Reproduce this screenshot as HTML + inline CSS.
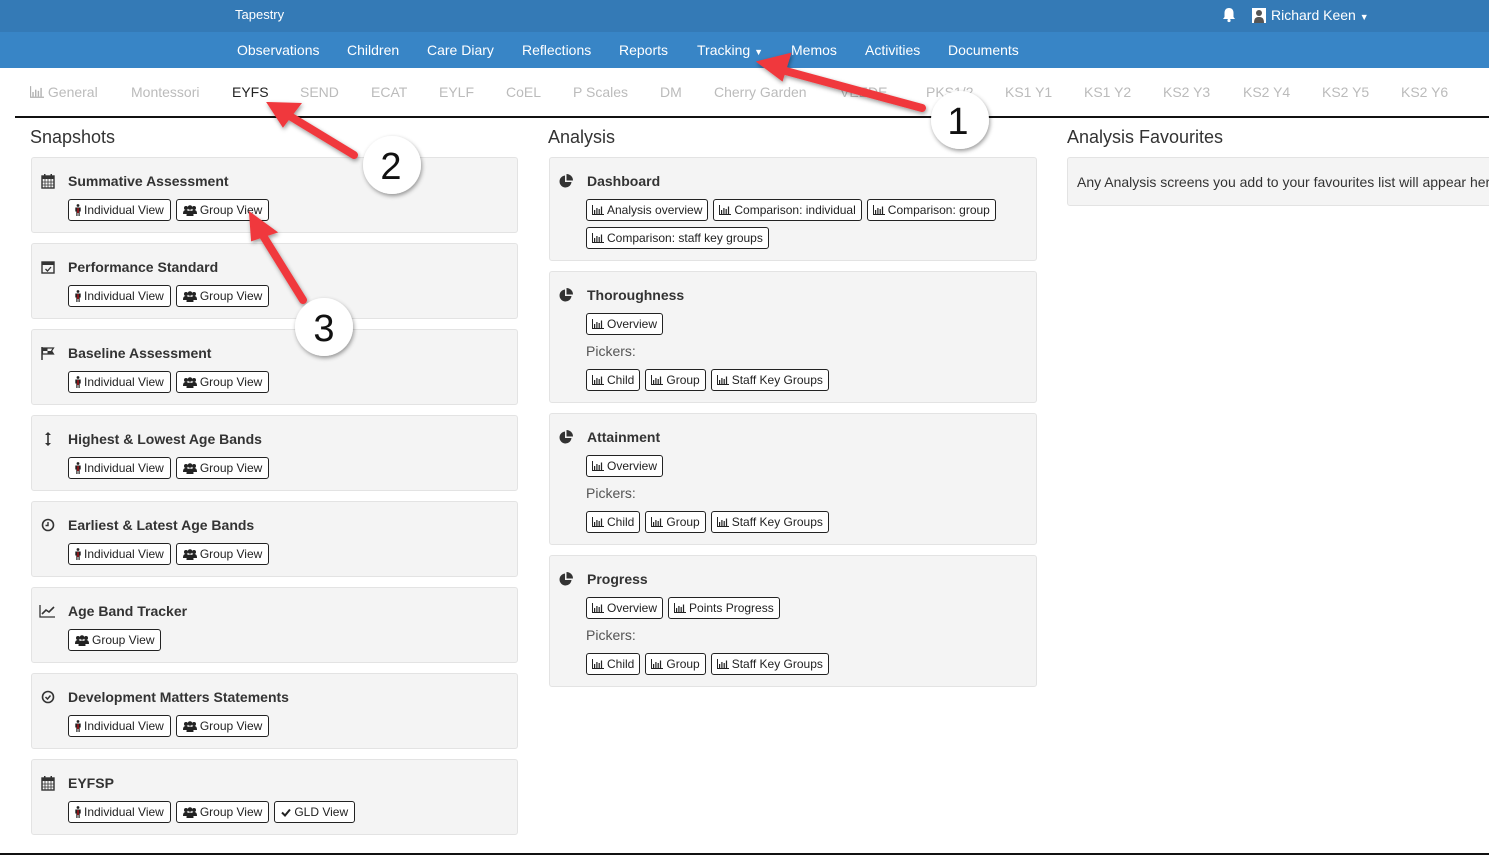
<!DOCTYPE html>
<html><head><meta charset="utf-8"><style>
*{box-sizing:border-box;margin:0;padding:0}
body{width:1489px;height:856px;position:relative;overflow:hidden;background:#fff;font-family:"Liberation Sans",Arial,sans-serif;color:#333}
.top{position:absolute;left:0;top:0;width:1489px;height:32px;background:#347ab6}
.nav{position:absolute;left:0;top:32px;width:1489px;height:36px;background:#3885c6}
.t{position:absolute;white-space:nowrap}
.w{color:#fff}
.nv{font-size:14px;color:#fff;top:42px}
.tab{font-size:14px;color:#bbb;top:84px}
.h{font-size:18px;color:#333;top:127px}
.card{position:absolute;background:#f4f4f4;border:1px solid #e3e3e3;border-radius:3px}
.ct{position:absolute;font-size:14px;font-weight:bold;color:#333;white-space:nowrap}
.ic{position:absolute;width:16px;height:16px}
.row{position:absolute;display:flex;gap:5px}
.b{height:22px;border:1px solid #222;border-radius:3px;background:#fff;font-size:12px;color:#222;padding:0 5px;line-height:20px;white-space:nowrap;display:flex;align-items:center;gap:3px}
.b.s{padding:0 6px;gap:3px}
.pk{position:absolute;font-size:14px;color:#555}
</style></head><body>
<svg width="0" height="0" style="position:absolute">
<defs>
<symbol id="ch" viewBox="0 0 12 10"><path d="M0.5 0v9.5H12" stroke="#222" fill="none"/><rect x="2" y="5" width="1.2" height="4" fill="#222"/><rect x="4.3" y="3" width="1.2" height="6" fill="#222"/><rect x="6.6" y="4" width="1.2" height="5" fill="#222"/><rect x="8.9" y="1.5" width="1.2" height="7.5" fill="#222"/></symbol>
<symbol id="pr" viewBox="0 0 6 12"><circle cx="3" cy="1.5" r="1.4" fill="#222"/><path d="M0.3 3.5h5.4v4h-1v4.5h-1.2V9h-1v3H1.3V7.5h-1z" fill="#222"/><rect x="2.2" y="4" width="1.6" height="5" fill="#a0141a"/></symbol>
<symbol id="gr" viewBox="0 0 14 11"><circle cx="3" cy="3" r="2" fill="#222"/><circle cx="11" cy="3" r="2" fill="#222"/><circle cx="7" cy="2.5" r="2.3" fill="#222"/><path d="M0 9c0-3 1-4 3-4s2 1 2 2h4c0-1 0-2 2-2s3 1 3 4z" fill="#222"/><path d="M3.5 11c0-4 1-5.5 3.5-5.5s3.5 1.5 3.5 5.5z" fill="#222"/></symbol>
<symbol id="pie" viewBox="0 0 16 16"><path d="M7 2.5A6 6 0 1 0 13.5 9H7z" fill="#333"/><path d="M8.5 1v6.5H15A6.5 6.5 0 0 0 8.5 1z" fill="#333"/></symbol>
<symbol id="cal" viewBox="0 0 16 16"><rect x="2" y="3" width="12" height="12" fill="none" stroke="#333" stroke-width="1.4"/><rect x="2" y="3" width="12" height="3" fill="#333"/><rect x="4" y="1" width="1.5" height="3" fill="#333"/><rect x="10.5" y="1" width="1.5" height="3" fill="#333"/><path d="M2 9h12M2 12h12M5 6v9M8 6v9M11 6v9" stroke="#333" stroke-width=".8"/></symbol>
</defs></svg>
<div class="top"></div><div class="nav"></div>
<div class="t w" style="left:235px;top:7px;font-size:13px">Tapestry</div>
<svg style="position:absolute;left:1222px;top:7px" width="14" height="16" viewBox="0 0 14 16"><path d="M7 1c-3 0-4.5 2-4.5 5v4L1 12h12l-1.5-2V6C11.5 3 10 1 7 1z" fill="#fff"/><circle cx="7" cy="13.5" r="1.6" fill="#fff"/></svg>
<svg style="position:absolute;left:1252px;top:8px" width="14" height="15" viewBox="0 0 14 15"><rect width="14" height="15" fill="#fff"/><circle cx="7" cy="5" r="3" fill="#555"/><path d="M2 15c0-5 2-6 5-6s5 1 5 6z" fill="#555"/></svg>
<div class="t w" style="left:1271px;top:7px;font-size:14px">Richard Keen <span style="font-size:9px">▼</span></div>
<div class="t nv" style="left:237px">Observations</div>
<div class="t nv" style="left:347px">Children</div>
<div class="t nv" style="left:427px">Care Diary</div>
<div class="t nv" style="left:522px">Reflections</div>
<div class="t nv" style="left:619px">Reports</div>
<div class="t nv" style="left:697px">Tracking <span style="font-size:9px">▼</span></div>
<div class="t nv" style="left:791px">Memos</div>
<div class="t nv" style="left:865px">Activities</div>
<div class="t nv" style="left:948px">Documents</div>

<div class="t tab" style="left:30px"><svg width="14" height="12" style="vertical-align:-1px;opacity:.35"><use href="#ch"/></svg> General</div>
<div class="t tab" style="left:131px">Montessori</div>
<div class="t tab" style="left:232px;color:#222">EYFS</div>
<div class="t tab" style="left:300px">SEND</div>
<div class="t tab" style="left:371px">ECAT</div>
<div class="t tab" style="left:439px">EYLF</div>
<div class="t tab" style="left:506px">CoEL</div>
<div class="t tab" style="left:573px">P Scales</div>
<div class="t tab" style="left:660px">DM</div>
<div class="t tab" style="left:714px">Cherry Garden</div>
<div class="t tab" style="left:840px">VEEDE</div>
<div class="t tab" style="left:926px">PKS1/2</div>
<div class="t tab" style="left:1005px">KS1 Y1</div>
<div class="t tab" style="left:1084px">KS1 Y2</div>
<div class="t tab" style="left:1163px">KS2 Y3</div>
<div class="t tab" style="left:1243px">KS2 Y4</div>
<div class="t tab" style="left:1322px">KS2 Y5</div>
<div class="t tab" style="left:1401px">KS2 Y6</div>
<div style="position:absolute;left:15px;top:116px;width:1474px;height:2px;background:#111"></div>
<div style="position:absolute;left:0;top:853px;width:1489px;height:2px;background:#111"></div>

<div class="t h" style="left:30px">Snapshots</div>
<div class="t h" style="left:548px">Analysis</div>
<div class="t h" style="left:1067px">Analysis Favourites</div>

<!-- snapshots -->
<div class="card" style="left:31px;top:157px;width:487px;height:76px"></div>
<svg class="ic" style="left:40px;top:173px"><use href="#cal"/></svg><div class="ct" style="left:68px;top:173px">Summative Assessment</div>
<div class="row" style="left:68px;top:199px"><div class="b s"><svg width="6" height="12"><use href="#pr"/></svg>Individual View</div><div class="b s"><svg width="14" height="11"><use href="#gr"/></svg>Group View</div></div>

<div class="card" style="left:31px;top:243px;width:487px;height:76px"></div>
<svg class="ic" style="left:40px;top:259px" viewBox="0 0 16 16"><rect x="2" y="3" width="12" height="11" fill="none" stroke="#333" stroke-width="1.4"/><rect x="2" y="3" width="12" height="3" fill="#333"/><path d="M5.5 10l2 2 3.5-4" stroke="#333" fill="none" stroke-width="1.3"/></svg><div class="ct" style="left:68px;top:259px">Performance Standard</div>
<div class="row" style="left:68px;top:285px"><div class="b s"><svg width="6" height="12"><use href="#pr"/></svg>Individual View</div><div class="b s"><svg width="14" height="11"><use href="#gr"/></svg>Group View</div></div>

<div class="card" style="left:31px;top:329px;width:487px;height:76px"></div>
<svg class="ic" style="left:40px;top:345px" viewBox="0 0 16 16"><path d="M2 2v13" stroke="#333" stroke-width="1.5"/><path d="M2.5 3h11l-2 3 2 3h-11z" fill="none" stroke="#333" stroke-width="1.2"/><path d="M2.5 3h5v3h-5zM7.5 6h5v3h-5z" fill="#333"/></svg><div class="ct" style="left:68px;top:345px">Baseline Assessment</div>
<div class="row" style="left:68px;top:371px"><div class="b s"><svg width="6" height="12"><use href="#pr"/></svg>Individual View</div><div class="b s"><svg width="14" height="11"><use href="#gr"/></svg>Group View</div></div>

<div class="card" style="left:31px;top:415px;width:487px;height:76px"></div>
<svg class="ic" style="left:40px;top:431px" viewBox="0 0 16 16"><path d="M8 2v12" stroke="#333" stroke-width="1.6"/><path d="M5 4l3-3 3 3zM5 12l3 3 3-3z" fill="#333"/></svg><div class="ct" style="left:68px;top:431px">Highest &amp; Lowest Age Bands</div>
<div class="row" style="left:68px;top:457px"><div class="b s"><svg width="6" height="12"><use href="#pr"/></svg>Individual View</div><div class="b s"><svg width="14" height="11"><use href="#gr"/></svg>Group View</div></div>

<div class="card" style="left:31px;top:501px;width:487px;height:76px"></div>
<svg class="ic" style="left:40px;top:517px" viewBox="0 0 16 16"><circle cx="8" cy="8" r="5.5" fill="none" stroke="#333" stroke-width="1.6"/><path d="M8 5v3.5H5.5" fill="none" stroke="#333" stroke-width="1.4"/></svg><div class="ct" style="left:68px;top:517px">Earliest &amp; Latest Age Bands</div>
<div class="row" style="left:68px;top:543px"><div class="b s"><svg width="6" height="12"><use href="#pr"/></svg>Individual View</div><div class="b s"><svg width="14" height="11"><use href="#gr"/></svg>Group View</div></div>

<div class="card" style="left:31px;top:587px;width:487px;height:76px"></div>
<svg class="ic" style="left:39px;top:603px" viewBox="0 0 16 16"><path d="M1 2v12h15" stroke="#333" fill="none" stroke-width="1.3"/><path d="M3 11l4-4 3 2 5-5" stroke="#333" fill="none" stroke-width="1.6"/></svg><div class="ct" style="left:68px;top:603px">Age Band Tracker</div>
<div class="row" style="left:68px;top:629px"><div class="b s"><svg width="14" height="11"><use href="#gr"/></svg>Group View</div></div>

<div class="card" style="left:31px;top:673px;width:487px;height:76px"></div>
<svg class="ic" style="left:40px;top:689px" viewBox="0 0 16 16"><circle cx="8" cy="8" r="5.5" fill="none" stroke="#333" stroke-width="1.6"/><path d="M5.5 8l2 2 3-3.5" fill="none" stroke="#333" stroke-width="1.5"/></svg><div class="ct" style="left:68px;top:689px">Development Matters Statements</div>
<div class="row" style="left:68px;top:715px"><div class="b s"><svg width="6" height="12"><use href="#pr"/></svg>Individual View</div><div class="b s"><svg width="14" height="11"><use href="#gr"/></svg>Group View</div></div>

<div class="card" style="left:31px;top:759px;width:487px;height:76px"></div>
<svg class="ic" style="left:40px;top:775px"><use href="#cal"/></svg><div class="ct" style="left:68px;top:775px">EYFSP</div>
<div class="row" style="left:68px;top:801px"><div class="b s"><svg width="6" height="12"><use href="#pr"/></svg>Individual View</div><div class="b s"><svg width="14" height="11"><use href="#gr"/></svg>Group View</div><div class="b s"><svg width="10" height="9" viewBox="0 0 10 9"><path d="M1 4.5l3 3L9 1.5" stroke="#222" stroke-width="2" fill="none"/></svg>GLD View</div></div>

<!-- analysis -->
<div class="card" style="left:549px;top:157px;width:488px;height:104px"></div>
<svg class="ic" style="left:558px;top:173px"><use href="#pie"/></svg><div class="ct" style="left:587px;top:173px">Dashboard</div>
<div class="row" style="left:586px;top:199px"><div class="b"><svg width="12" height="10"><use href="#ch"/></svg>Analysis overview</div><div class="b"><svg width="12" height="10"><use href="#ch"/></svg>Comparison: individual</div><div class="b"><svg width="12" height="10"><use href="#ch"/></svg>Comparison: group</div></div>
<div class="row" style="left:586px;top:227px"><div class="b"><svg width="12" height="10"><use href="#ch"/></svg>Comparison: staff key groups</div></div>

<div class="card" style="left:549px;top:271px;width:488px;height:132px"></div>
<svg class="ic" style="left:558px;top:287px"><use href="#pie"/></svg><div class="ct" style="left:587px;top:287px">Thoroughness</div>
<div class="row" style="left:586px;top:313px"><div class="b"><svg width="12" height="10"><use href="#ch"/></svg>Overview</div></div>
<div class="pk" style="left:586px;top:343px">Pickers:</div>
<div class="row" style="left:586px;top:369px"><div class="b"><svg width="12" height="10"><use href="#ch"/></svg>Child</div><div class="b"><svg width="12" height="10"><use href="#ch"/></svg>Group</div><div class="b"><svg width="12" height="10"><use href="#ch"/></svg>Staff Key Groups</div></div>

<div class="card" style="left:549px;top:413px;width:488px;height:132px"></div>
<svg class="ic" style="left:558px;top:429px"><use href="#pie"/></svg><div class="ct" style="left:587px;top:429px">Attainment</div>
<div class="row" style="left:586px;top:455px"><div class="b"><svg width="12" height="10"><use href="#ch"/></svg>Overview</div></div>
<div class="pk" style="left:586px;top:485px">Pickers:</div>
<div class="row" style="left:586px;top:511px"><div class="b"><svg width="12" height="10"><use href="#ch"/></svg>Child</div><div class="b"><svg width="12" height="10"><use href="#ch"/></svg>Group</div><div class="b"><svg width="12" height="10"><use href="#ch"/></svg>Staff Key Groups</div></div>

<div class="card" style="left:549px;top:555px;width:488px;height:132px"></div>
<svg class="ic" style="left:558px;top:571px"><use href="#pie"/></svg><div class="ct" style="left:587px;top:571px">Progress</div>
<div class="row" style="left:586px;top:597px"><div class="b"><svg width="12" height="10"><use href="#ch"/></svg>Overview</div><div class="b"><svg width="12" height="10"><use href="#ch"/></svg>Points Progress</div></div>
<div class="pk" style="left:586px;top:627px">Pickers:</div>
<div class="row" style="left:586px;top:653px"><div class="b"><svg width="12" height="10"><use href="#ch"/></svg>Child</div><div class="b"><svg width="12" height="10"><use href="#ch"/></svg>Group</div><div class="b"><svg width="12" height="10"><use href="#ch"/></svg>Staff Key Groups</div></div>

<div class="card" style="left:1067px;top:157px;width:440px;height:49px"></div>
<div class="t" style="left:1077px;top:174px;font-size:14px;color:#333">Any Analysis screens you add to your favourites list will appear here</div>

<svg width="1489" height="856" style="position:absolute;left:0;top:0" xmlns="http://www.w3.org/2000/svg">
<defs><filter id="s" x="-50%" y="-50%" width="200%" height="200%"><feDropShadow dx="1" dy="2" stdDeviation="2" flood-opacity="0.4"/></filter></defs>
<g fill="#f0393d" stroke="#f0393d" stroke-linecap="round" filter="url(#s)">
<line x1="922" y1="108" x2="782" y2="70" stroke-width="8"/><polygon points="758,62 790,54 782,80" stroke-width="2"/>
<line x1="354" y1="155" x2="288" y2="115" stroke-width="8"/><polygon points="268,103 300,104 283,126" stroke-width="2"/>
<line x1="303" y1="300" x2="262" y2="234" stroke-width="8"/><polygon points="250,213 276,232 252,240" stroke-width="2"/>
</g>
<g fill="#fff" filter="url(#s)"><circle cx="960" cy="120" r="29"/><circle cx="392" cy="165" r="29"/><circle cx="324" cy="327" r="29"/></g>
<g font-family="Liberation Sans,sans-serif" font-size="38" fill="#111" text-anchor="middle">
<text x="958" y="134">1</text><text x="391" y="179">2</text><text x="324" y="341">3</text></g>
</svg>
</body></html>
